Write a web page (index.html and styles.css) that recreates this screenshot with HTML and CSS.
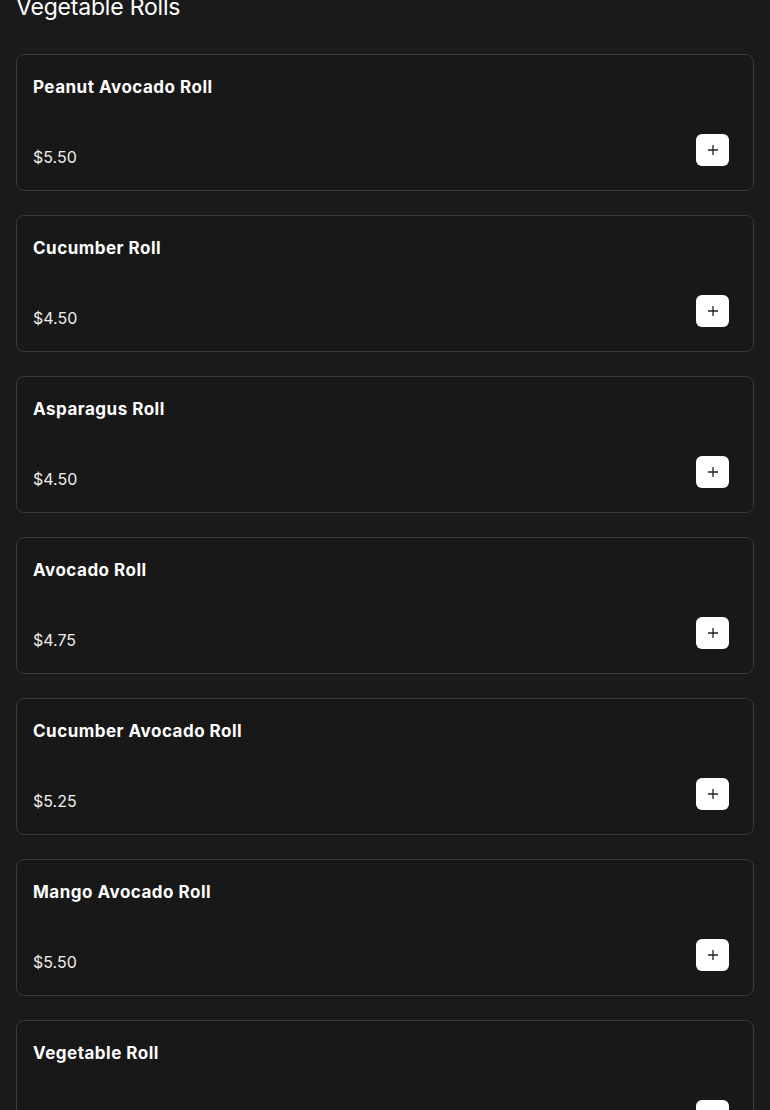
FILE: index.html
```html
<!DOCTYPE html>
<html lang="en">
<head>
  <meta charset="UTF-8">
  <title>Vegetable Rolls</title>
  <link rel="stylesheet" href="styles.css">
</head>
<body>
  <div class="menu-section">
    <h2 class="section-title">Vegetable Rolls</h2>

    <div class="item-list">
      <div class="item-card">
        <h3 class="item-name">Peanut Avocado Roll</h3>
        <div class="item-footer">
          <span class="item-price">$5.50</span>
          <button type="button" class="add-btn" aria-label="Add">
            <svg viewBox="0 0 12 12" width="12" height="12"><path d="M6 1v10M1 6h10" stroke="#222" stroke-width="1.3"/></svg>
          </button>
        </div>
      </div>

      <div class="item-card">
        <h3 class="item-name">Cucumber Roll</h3>
        <div class="item-footer">
          <span class="item-price">$4.50</span>
          <button type="button" class="add-btn" aria-label="Add">
            <svg viewBox="0 0 12 12" width="12" height="12"><path d="M6 1v10M1 6h10" stroke="#222" stroke-width="1.3"/></svg>
          </button>
        </div>
      </div>

      <div class="item-card">
        <h3 class="item-name">Asparagus Roll</h3>
        <div class="item-footer">
          <span class="item-price">$4.50</span>
          <button type="button" class="add-btn" aria-label="Add">
            <svg viewBox="0 0 12 12" width="12" height="12"><path d="M6 1v10M1 6h10" stroke="#222" stroke-width="1.3"/></svg>
          </button>
        </div>
      </div>

      <div class="item-card">
        <h3 class="item-name">Avocado Roll</h3>
        <div class="item-footer">
          <span class="item-price">$4.75</span>
          <button type="button" class="add-btn" aria-label="Add">
            <svg viewBox="0 0 12 12" width="12" height="12"><path d="M6 1v10M1 6h10" stroke="#222" stroke-width="1.3"/></svg>
          </button>
        </div>
      </div>

      <div class="item-card">
        <h3 class="item-name">Cucumber Avocado Roll</h3>
        <div class="item-footer">
          <span class="item-price">$5.25</span>
          <button type="button" class="add-btn" aria-label="Add">
            <svg viewBox="0 0 12 12" width="12" height="12"><path d="M6 1v10M1 6h10" stroke="#222" stroke-width="1.3"/></svg>
          </button>
        </div>
      </div>

      <div class="item-card">
        <h3 class="item-name">Mango Avocado Roll</h3>
        <div class="item-footer">
          <span class="item-price">$5.50</span>
          <button type="button" class="add-btn" aria-label="Add">
            <svg viewBox="0 0 12 12" width="12" height="12"><path d="M6 1v10M1 6h10" stroke="#222" stroke-width="1.3"/></svg>
          </button>
        </div>
      </div>

      <div class="item-card">
        <h3 class="item-name">Vegetable Roll</h3>
        <div class="item-footer">
          <span class="item-price">$4.50</span>
          <button type="button" class="add-btn" aria-label="Add">
            <svg viewBox="0 0 12 12" width="12" height="12"><path d="M6 1v10M1 6h10" stroke="#222" stroke-width="1.3"/></svg>
          </button>
        </div>
      </div>
    </div>
  </div>
</body>
</html>
```

FILE: styles.css
```css
body {
  margin: 0;
  background: #1a1a1a;
  color: #fff;
  font-family: "Inter", "Noto Sans", sans-serif;
  overflow: hidden;
}
.menu-section {
  padding: 0 16px;
}
.section-title {
  margin: -11px 0 29px;
  font-size: 23px;
  font-weight: 400;
  line-height: 36px;
  height: 36px;
  letter-spacing: -0.2px;
}
.item-list {
  display: flex;
  flex-direction: column;
  gap: 24px;
}
.item-card {
  background: #181818;
  border: 1px solid #3a3a3a;
  border-radius: 8px;
  padding: 20px 24px 24px 16px;
}
.item-name {
  margin: 0;
  font-size: 17px;
  font-weight: 700;
  line-height: 24px;
  letter-spacing: 0.5px;
}
.item-footer {
  display: flex;
  justify-content: space-between;
  align-items: flex-end;
  margin-top: 35px;
}
.item-price {
  font-size: 16px;
  line-height: 24px;
  color: #eee;
  margin-bottom: -3px;
}
.add-btn {
  width: 33px;
  height: 32px;
  background: #fff;
  border: none;
  border-radius: 6px;
  padding: 0;
  display: flex;
  align-items: center;
  justify-content: center;
  cursor: pointer;
}
```
